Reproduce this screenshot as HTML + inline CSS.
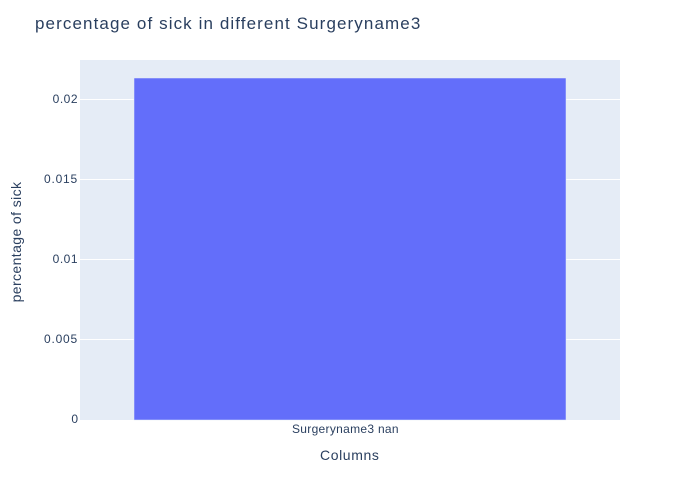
<!DOCTYPE html>
<html><head><style>
body{margin:0;width:700px;height:500px;background:#fff;font-family:"Liberation Sans",sans-serif;position:relative;overflow:hidden}
.t{position:absolute;color:#2a3f5f;white-space:nowrap}
</style></head><body>
<div class="t" style="left:35px;top:14px;font-size:17px;letter-spacing:1.1px">percentage of sick in different Surgeryname3</div>
<svg style="position:absolute;left:0;top:0" width="700" height="500">
<rect x="80" y="60" width="540" height="360" fill="#e5ecf6"/>
<g stroke="#fff" stroke-width="1">
<line x1="80" x2="620" y1="99.5" y2="99.5"/>
<line x1="80" x2="620" y1="179.5" y2="179.5"/>
<line x1="80" x2="620" y1="259.5" y2="259.5"/>
<line x1="80" x2="620" y1="339.5" y2="339.5"/>
</g>
<rect x="134" y="78" width="432" height="342" fill="#636efa" stroke="#e5ecf6" stroke-width="0.5"/>
</svg>
<div class="t" style="right:622px;top:92px;font-size:12px;letter-spacing:0.5px">0.02</div>
<div class="t" style="right:622px;top:172px;font-size:12px;letter-spacing:0.8px">0.015</div>
<div class="t" style="right:622px;top:252px;font-size:12px;letter-spacing:0.5px">0.01</div>
<div class="t" style="right:622px;top:332px;font-size:12px;letter-spacing:0.8px">0.005</div>
<div class="t" style="right:622px;top:412px;font-size:12px">0</div>
<div class="t" style="left:292px;top:422px;font-size:12px;letter-spacing:0.3px">Surgeryname3 nan</div>
<div class="t" style="left:320px;top:447px;font-size:14px;letter-spacing:0.6px">Columns</div>
<div class="t" style="left:16px;top:242px;font-size:14px;letter-spacing:0.4px;transform:translate(-50%,-50%) rotate(-90deg);transform-origin:center;">percentage of sick</div>
</body></html>
